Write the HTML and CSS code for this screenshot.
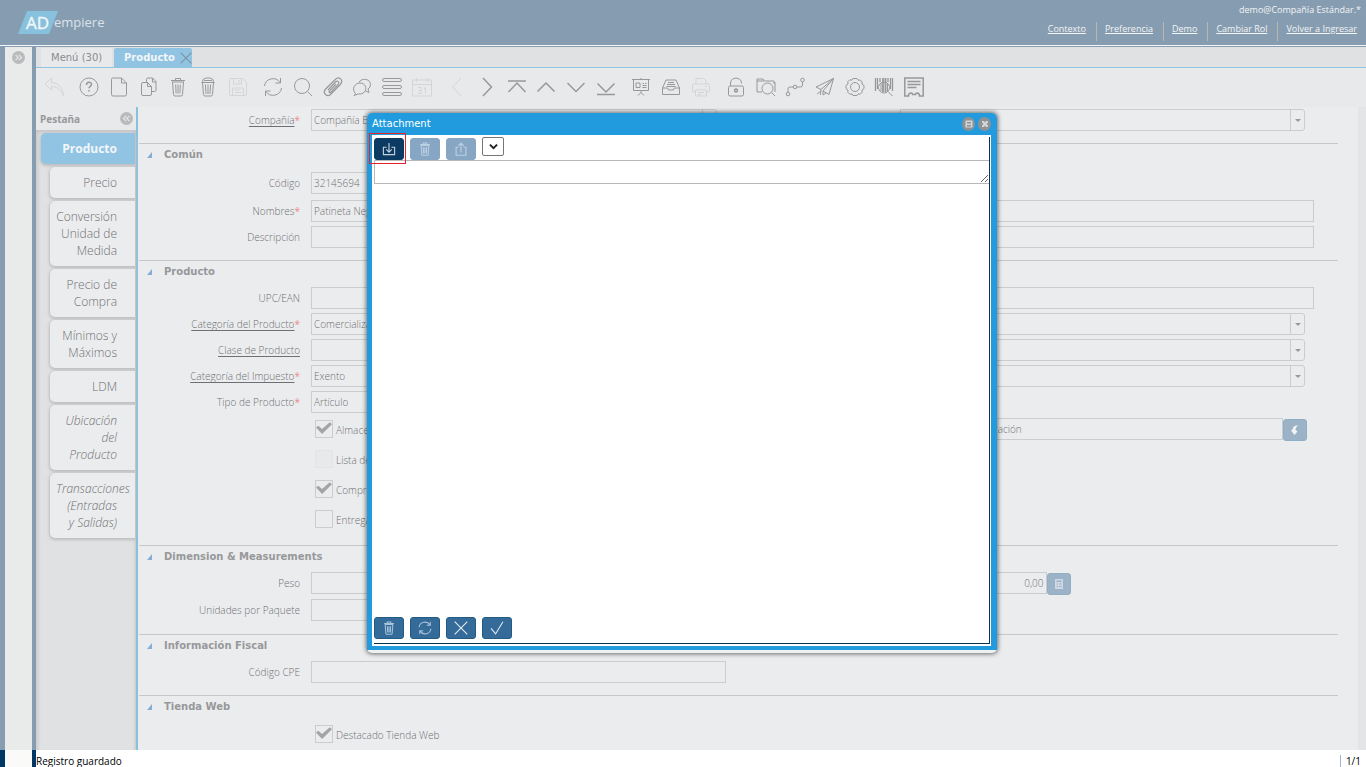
FILE: index.html
```html
<!DOCTYPE html>
<html lang="es">
<head>
<meta charset="utf-8">
<title>ADempiere - Producto</title>
<link rel="stylesheet" href="styles.css">
</head>
<body>
<svg class="sprite" aria-hidden="true">
  <symbol id="i-undo" viewBox="0 0 20 20"><path d="M7.500 1L1 7l6.500 6V9.500c5 0 9 2 12 9.500-.5-8-5-13-12-13.500z"/></symbol>
  <symbol id="i-help" viewBox="0 0 20 20"><circle cx="10" cy="10" r="9"/><path d="M7.500 8c0-3.500 5-3.500 5-.7 0 2-2.500 2-2.500 4M10 13v1.500" stroke-width="1.500"/></symbol>
  <symbol id="i-new" viewBox="0 0 20 20"><path d="M3.500 1h9l5 5v11.500q0 1.500-1.500 1.500H4q-1.500 0-1.500-1.500V2.500Q2.500 1 3.500 1zM12.500 1v5h5"/></symbol>
  <symbol id="i-copy" viewBox="0 0 20 20"><path d="M4 5.500h4.500l4 4V17q0 1.500-1.500 1.500H4q-1.500 0-1.500-1.500V7Q2.500 5.500 4 5.500zM8.500 5.500v4h4M7.500 5.500v-3Q7.500 1 9 1h4.500L17 4.500V13q0 1.500-1.500 1.500h-3M13.500 1v4H17"/></symbol>
  <symbol id="i-trash" viewBox="0 0 20 20"><path d="M3 3.500h14M7.500 3V1.500h5V3M4 5h12M4.500 5l1 12.500q0 1.500 1.500 1.500h6q1.500 0 1.500-1.500L15.500 5M7.700 7.500l.4 9M10 7.500v9M12.300 7.500l-.4 9"/></symbol>
  <symbol id="i-trash2" viewBox="0 0 20 20"><path d="M3.500 5.500h13M4.500 5L5 2.500 8 1h4l3 1.500.5 2.500M6 3.500h8M4.500 5.500l1 12q0 1.500 1.500 1.500h6q1.500 0 1.500-1.500l1-12M7.300 7.500l.8 9.500M10 7.500V17M12.700 7.500l-.8 9.500"/></symbol>
  <symbol id="i-save" viewBox="0 0 20 20"><path d="M2.500 1.500h12L18.500 5v12.500q0 1-1 1h-15q-1 0-1-1v-15q0-1 1-1zM5.500 1.500V7h8V1.500M11 3v2.500M4.500 18v-7h11v7M6.500 13h5M6.500 15.500h7"/></symbol>
  <symbol id="i-refresh" viewBox="0 0 20 20"><path d="M1.500 9A8.500 8.500 0 0 1 17 5.500M18.500 11A8.500 8.500 0 0 1 3 14.500M17.500 1v5h-5M2.500 19v-5h5"/></symbol>
  <symbol id="i-search" viewBox="0 0 20 20"><circle cx="9" cy="9" r="7.500"/><path d="M14.500 14.500L19 19"/></symbol>
  <symbol id="i-clip" viewBox="0 0 20 20"><path d="M5 13l7.500-8c2-2 4.500.3 2.700 2.300l-7.500 8c-1 1-2.200-.2-1.300-1.200l6.600-7M7.500 17.500l9.800-10c3.800-4.500-1.500-8.800-5-5L2.700 12c-4 4.500 1.800 8.500 4.800 5.500z" stroke-width="1.200"/></symbol>
  <symbol id="i-chat" viewBox="0 0 20 20"><path d="M7 5.500C8.500 1 18.500 1 18.500 7.500q0 3-2.500 4.500l1 3.500-3.500-1.500"/><path d="M3.500 16.500C-1 12 3 6 8 6s8 5.500 4 9.500q-2.500 2-6 1.500L2 18.500z"/></symbol>
  <symbol id="i-list" viewBox="0 0 20 20"><rect x=".5" y="1.500" width="19" height="3" rx="1.500"/><rect x=".5" y="8.500" width="19" height="3" rx="1.500"/><rect x=".5" y="15.500" width="19" height="3" rx="1.500"/></symbol>
  <symbol id="i-cal" viewBox="0 0 20 20"><path d="M.5 3h19v16H.5zM.5 7.500h19M4.500 1v4M15.500 1v4M6 10.500h3v6H6M6.500 13.500H9M12 11.500l1.500-1v6"/></symbol>
  <symbol id="i-left" viewBox="0 0 20 20"><path d="M14 1L5.500 10 14 19"/></symbol>
  <symbol id="i-right" viewBox="0 0 20 20"><path d="M6 1l8.500 9L6 19" stroke-width="1.500"/></symbol>
  <symbol id="i-first" viewBox="0 0 20 20"><path d="M1 4h18M1.500 15L10 6l8.500 9" stroke-width="1.500"/></symbol>
  <symbol id="i-up" viewBox="0 0 20 20"><path d="M1.500 14.500L10 6l8.500 8.500" stroke-width="1.500"/></symbol>
  <symbol id="i-down" viewBox="0 0 20 20"><path d="M1.500 6l8.500 8.500L18.500 6" stroke-width="1.500"/></symbol>
  <symbol id="i-last" viewBox="0 0 20 20"><path d="M1 17.500h18M1.500 6.500l8.500 8.500 8.500-8.500" stroke-width="1.500"/></symbol>
  <symbol id="i-board" viewBox="0 0 20 20"><path d="M1 2.500h18M2.500 3v10.500h15V3M10 2.500V1M10 13.500v2M7 18.500l3-3 3 3M5 6h4v4.500H5zM11.500 6.500H13M14 6.500h1.500M11.500 8.500h4M11.500 10.500h4"/></symbol>
  <symbol id="i-inbox" viewBox="0 0 20 20"><path d="M1.500 11v6.500h17V11L15 3H5zM1.500 11H6q1.500 0 1.500 2h5q0-2 1.500-2h4.500M7 5.500h6M6 7.500h8M5.500 9.500h9"/></symbol>
  <symbol id="i-print" viewBox="0 0 20 20"><path d="M5 7V1.500h7.500L15 4v3M4 15H1.500V9q0-2 1.500-2h14q1.500 0 1.500 2v6H16M4.500 13h11v6h-11zM7 15.500h6M7 17.500h3M14 9.500h2"/></symbol>
  <symbol id="i-lock" viewBox="0 0 20 20"><rect x="2.500" y="9" width="15" height="10" rx="1.500"/><path d="M4.500 9V6c0-6.500 11-6.500 11 0v.5"/><circle cx="10" cy="13.500" r="1.500" stroke-width="1.500"/></symbol>
  <symbol id="i-folder" viewBox="0 0 20 20"><path d="M1 15V2h6l1.500 2H18v3M1 15h5M19 15V5M1 4h7"/><circle cx="11.500" cy="11.500" r="5.500"/><path d="M15.500 15.500L19 19"/></symbol>
  <symbol id="i-flow" viewBox="0 0 20 20"><circle cx="3" cy="17" r="1.800"/><circle cx="10" cy="10" r="1.800"/><circle cx="17.500" cy="3" r="1.800"/><path d="M3 15v-3q0-2 2-2h3M12 10h3.500q2 0 2-2V5"/></symbol>
  <symbol id="i-send" viewBox="0 0 20 20"><path d="M18.500 1.500L1 10l5 2.500L18.500 1.500 8 14l6 3.500zM6 12.500L5.500 18M8 14v4l3-2M2 17l4-3"/></symbol>
  <symbol id="i-gear" viewBox="0 0 20 20"><path d="M8 1.500h4l1 1.700 2.300-.2 1.900 2-.3 2L19 8.500v3L17 13l.2 2.200-2 2-2.200-.3-1 1.600H8l-1-1.600-2.200.3-2-2L3 13l-2-1.500v-3L3 7l-.2-2.200 2-2 2.200.4z"/><circle cx="10" cy="10" r="4.500"/></symbol>
  <symbol id="i-bar" viewBox="0 0 20 20"><path d="M1.500 1v13M3.500 1v11M16.500 1v11M18.500 1v13M6 1v4M14 1v4" stroke-width="1.300"/><path d="M9 1v14M11.500 1v14" stroke-width="1.800"/><path d="M7 6v8M13.500 6v8"/><circle cx="10" cy="10.500" r="5.500"/><path d="M14 14.500l4.500 4.500"/></symbol>
  <symbol id="i-receipt" viewBox="0 0 20 20"><path d="M.8 19V1h18.400v18h-3.700q0-3-2.500-3-1.500 0-1.500 1.500h-3Q8.500 16 7 16q-2.500 0-2.500 3z" stroke-width="1.500"/><path d="M3.500 4.500h13M3.500 7.500h13M3.500 10.500h9" stroke-width="1.300"/></symbol>
  <symbol id="i-import" viewBox="0 0 20 20"><path d="M6.500 7.500H2v10.500h16V7.500h-4.500M10 1.500v13M6 10.500l4 4 4-4" stroke-width="1.600"/></symbol>
  <symbol id="i-export" viewBox="0 0 20 20"><path d="M6.500 7.500H3v11.500h14V7.500h-3.500M10 15V1.500M6 5.500l4-4 4 4" stroke-width="1.600"/></symbol>
  <symbol id="i-x" viewBox="0 0 20 20"><path d="M1 1l18 18M19 1L1 19"/></symbol>
  <symbol id="i-ok" viewBox="0 0 20 20"><path d="M1.500 10.500L8 18.500 18.500 1"/></symbol>
  <symbol id="i-dleft" viewBox="0 0 20 20"><path d="M9.500 6l-4 4 4 4M14.500 6l-4 4 4 4" stroke-width="2"/></symbol>
  <symbol id="i-dright" viewBox="0 0 20 20"><path d="M5.500 6l4 4-4 4M10.500 6l4 4-4 4" stroke-width="2"/></symbol>
</svg>

<div class="app">
  <header class="top">
    <svg class="logo" viewBox="0 0 90 26" role="img" aria-label="ADempiere">
      <path class="logo-mark" d="M9 1h31l-9 23H0z"/>
      <text class="logo-ad" x="8" y="19">AD</text>
      <text class="logo-rest" x="36" y="17">empiere</text>
    </svg>
    <div class="account">
      <p class="who">demo@Compañía Estándar.*</p>
      <nav class="links">
        <a href="#">Contexto</a>
        <a href="#">Preferencia</a>
        <a href="#">Demo</a>
        <a href="#">Cambiar Rol</a>
        <a href="#">Volver a Ingresar</a>
      </nav>
    </div>
  </header>

  <div class="body">
    <aside class="rail">
      <button class="round" aria-label="Expandir"><svg><use href="#i-dright"/></svg></button>
    </aside>
    <main class="work">
      <nav class="tabs">
        <a class="tab" href="#">Menú (30)</a>
        <a class="tab tab-on" href="#">Producto <svg class="tab-x"><use href="#i-x"/></svg></a>
      </nav>
      <div class="tools">
        <div class="grp"><button class="off" aria-label="Deshacer"><svg><use href="#i-undo"/></svg></button></div>
        <div class="grp grp-6">
          <button aria-label="Ayuda"><svg><use href="#i-help"/></svg></button>
          <button aria-label="Nuevo"><svg><use href="#i-new"/></svg></button>
          <button aria-label="Copiar"><svg><use href="#i-copy"/></svg></button>
          <button aria-label="Eliminar"><svg><use href="#i-trash"/></svg></button>
          <button aria-label="Eliminar selección"><svg><use href="#i-trash2"/></svg></button>
          <button class="off" aria-label="Guardar"><svg><use href="#i-save"/></svg></button>
        </div>
        <div class="grp grp-6">
          <button aria-label="Refrescar"><svg><use href="#i-refresh"/></svg></button>
          <button aria-label="Buscar"><svg><use href="#i-search"/></svg></button>
          <button aria-label="Adjunto"><svg><use href="#i-clip"/></svg></button>
          <button aria-label="Chat"><svg><use href="#i-chat"/></svg></button>
          <button aria-label="Cambiar vista"><svg><use href="#i-list"/></svg></button>
          <button class="off" aria-label="Historial"><svg><use href="#i-cal"/></svg></button>
        </div>
        <div class="grp grp-6">
          <button class="off" aria-label="Padre"><svg><use href="#i-left"/></svg></button>
          <button aria-label="Detalle"><svg><use href="#i-right"/></svg></button>
          <button aria-label="Primero"><svg><use href="#i-first"/></svg></button>
          <button aria-label="Anterior"><svg><use href="#i-up"/></svg></button>
          <button aria-label="Siguiente"><svg><use href="#i-down"/></svg></button>
          <button aria-label="Último"><svg><use href="#i-last"/></svg></button>
        </div>
        <div class="grp grp-3">
          <button aria-label="Informe"><svg><use href="#i-board"/></svg></button>
          <button aria-label="Archivo"><svg><use href="#i-inbox"/></svg></button>
          <button class="off" aria-label="Imprimir"><svg><use href="#i-print"/></svg></button>
        </div>
        <div class="grp grp-7">
          <button aria-label="Bloquear"><svg><use href="#i-lock"/></svg></button>
          <button aria-label="Acercar"><svg><use href="#i-folder"/></svg></button>
          <button aria-label="Flujo de trabajo"><svg><use href="#i-flow"/></svg></button>
          <button aria-label="Solicitudes"><svg><use href="#i-send"/></svg></button>
          <button aria-label="Proceso"><svg><use href="#i-gear"/></svg></button>
          <button aria-label="Información de producto"><svg><use href="#i-bar"/></svg></button>
          <button aria-label="Recibo"><svg><use href="#i-receipt"/></svg></button>
        </div>
      </div>

      <div class="panes">
        <nav class="side">
          <div class="side-head">Pestaña <button class="round" aria-label="Contraer"><svg><use href="#i-dleft"/></svg></button></div>
          <div class="side-list">
            <a class="st st-on" href="#">Producto</a>
            <a class="st" href="#">Precio</a>
            <a class="st" href="#">Conversión<br>Unidad de<br>Medida</a>
            <a class="st" href="#">Precio de<br>Compra</a>
            <a class="st" href="#">Mínimos y<br>Máximos</a>
            <a class="st" href="#">LDM</a>
            <a class="st st-sub" href="#">Ubicación<br>del<br>Producto</a>
            <a class="st st-sub" href="#">Transacciones<br>(Entradas<br>y Salidas)</a>
          </div>
        </nav>

        <form class="form">
          <div class="lead">
            <div class="row">
              <label for="org"><u>Compañía</u><b>*</b></label>
              <span class="combo"><select id="org"><option>Compañía Estándar</option></select></span>
              <span class="combo second"><select aria-label="Organización"><option></option></select></span>
            </div>
          </div>

          <section class="sec">
            <h2>Común</h2>
            <div class="row row-first"><label for="cod">Código</label><input id="cod" value="32145694"></div>
            <div class="row"><label for="nom">Nombres<b>*</b></label><input id="nom" value="Patineta Negra"><input class="second" aria-label="Nombre adicional"></div>
            <div class="row"><label for="des">Descripción</label><input id="des"><input class="second" aria-label="Comentario"></div>
          </section>

          <section class="sec">
            <h2>Producto</h2>
            <div class="row"><label for="upc">UPC/EAN</label><input id="upc"><input class="second" aria-label="SKU"></div>
            <div class="row"><label for="cat"><u>Categoría del Producto</u><b>*</b></label><span class="combo"><select id="cat"><option>Comercialización</option></select></span><span class="combo second"><select aria-label="Grupo"><option></option></select></span></div>
            <div class="row"><label for="cla"><u>Clase de Producto</u></label><span class="combo"><select id="cla"><option></option></select></span><span class="combo second"><select aria-label="Clasificación"><option></option></select></span></div>
            <div class="row"><label for="imp"><u>Categoría del Impuesto</u><b>*</b></label><span class="combo"><select id="imp"><option>Exento</option></select></span><span class="combo second"><select aria-label="Unidad"><option></option></select></span></div>
            <div class="row"><label for="tip">Tipo de Producto<b>*</b></label><span class="combo"><select id="tip"><option>Artículo</option></select></span></div>
            <div class="row row-check">
              <label class="check"><input type="checkbox" checked> Almacenado</label>
              <span class="with-btn second"><input class="loc" aria-label="Ubicación" value="Ubicación"><button type="button" class="mini" aria-label="Elegir ubicación"><svg viewBox="0 0 12 12"><path d="M9.500 1.500Q4 1 3.500 5.500L2 6.500 5.500 11 8.500 7.500 6.500 6Q6.500 3 9.500 1.500z"/></svg></button></span>
            </div>
            <div class="row row-check"><label class="check"><input type="checkbox" disabled> Lista de Materiales</label></div>
            <div class="row row-check"><label class="check"><input type="checkbox" checked> Comprado</label></div>
            <div class="row row-check"><label class="check"><input type="checkbox"> Entrega Directa</label></div>
          </section>

          <section class="sec">
            <h2>Dimension &amp; Measurements</h2>
            <div class="row row-num">
              <label for="pes">Peso</label><input id="pes">
              <span class="with-btn second"><input class="num" aria-label="Volumen" value="0,00"><button type="button" class="mini" aria-label="Calculadora"><svg viewBox="0 0 12 12"><path fill-rule="evenodd" opacity=".6" d="M2 1h8v10H2zM3.500 2.500v1.500h5V2.500zM3.500 5.500v1h1.500v-1zM6 5.500v1h2.500v-1zM3.500 8v1h1.500V8zM6 8v1h2.500V8z"/></svg></button></span>
            </div>
            <div class="row row-num"><label for="uni">Unidades por Paquete</label><input id="uni"></div>
          </section>

          <section class="sec">
            <h2>Información Fiscal</h2>
            <div class="row"><label for="cpe">Código CPE</label><input id="cpe"></div>
          </section>

          <section class="sec">
            <h2>Tienda Web</h2>
            <div class="row row-check"><label class="check"><input type="checkbox" checked> Destacado Tienda Web</label></div>
          </section>
        </form>
      </div>
    </main>
  </div>

  <footer class="status"><span>Registro guardado</span><span class="count">1/1</span></footer>
</div>

<div class="modal" role="dialog" aria-labelledby="mt">
  <div class="win">
    <div class="bar">
      <h1 id="mt">Attachment</h1>
      <button class="wbtn" aria-label="Maximizar"><svg viewBox="0 0 12 12"><path fill-rule="evenodd" d="M3 2.500h6l.5.5v6.500H2.500V3zM4 4v1.500h4V4zM4 7v1.500h4V7z"/></svg></button>
      <button class="wbtn" aria-label="Cerrar"><svg viewBox="0 0 12 12"><path d="M3 3h2l1 1.500L7 3h2v1.500L7.500 6 9 7.500V9H7L6 7.500 5 9H3V7.500L4.500 6 3 4.500z"/></svg></button>
    </div>
    <div class="sheet">
      <div class="content">
        <div class="acts acts-top">
          <button class="act act-on" aria-label="Cargar"><svg><use href="#i-import"/></svg></button>
          <button class="act act-dim" disabled aria-label="Borrar"><svg><use href="#i-trash"/></svg></button>
          <button class="act act-dim" disabled aria-label="Exportar"><svg><use href="#i-export"/></svg></button>
          <span class="pick"><select aria-label="Archivo adjunto"><option></option></select><svg viewBox="0 0 20 20"><path d="M3.500 6.500L10 13l6.500-6.500"/></svg></span>
        </div>
        <textarea class="note" aria-label="Nota"></textarea>
        <div class="preview"></div>
        <div class="acts">
          <button class="act" aria-label="Borrar todo"><svg><use href="#i-trash"/></svg></button>
          <button class="act" aria-label="Refrescar"><svg><use href="#i-refresh"/></svg></button>
          <button class="act act-lit" aria-label="Cancelar"><svg><use href="#i-x"/></svg></button>
          <button class="act act-lit" aria-label="Aceptar"><svg><use href="#i-ok"/></svg></button>
        </div>
      </div>
    </div>
  </div>
</div>
</body>
</html>
```
FILE: styles.css
```css
*, *::before, *::after { box-sizing: border-box; }
body { margin: 0; font: 10px/14px "Open Sans", "Noto Sans", sans-serif; color: #8b8c8e; background: #fff; }
button, input, select, textarea { font: inherit; color: inherit; margin: 0; padding: 0; border: 0; background: none; border-radius: 0; }
a { color: inherit; }
p, h1, h2 { margin: 0; }
svg { display: block; fill: none; stroke: currentColor; }
.sprite { position: absolute; width: 0; height: 0; }

.app { height: 100vh; display: flex; flex-direction: column; overflow: hidden; }

.top { height: 47px; flex: none; display: flex; justify-content: space-between; background: #869cb0; border-bottom: 1px solid #869cb0; box-shadow: inset 0 -1px #f4f6f8; color: #f2f4f6; padding: 10px 5px 0 18px; font-size: 9px; }
.logo { width: 90px; height: 26px; stroke: none; }
.logo-mark { fill: #87c1de; }
.logo-ad { font: 17px "Open Sans", sans-serif; fill: #f2f6f9; stroke: #f2f6f9; stroke-width: .4px; }
.logo-rest { font: 13px "Open Sans", sans-serif; fill: #dbe2e9; }
.account { margin-top: -7px; display: flex; flex-direction: column; align-items: flex-end; gap: 5px; }
.links { display: flex; }
.links a { height: 19px; padding: 0 10px 0 8px; border-left: 1px solid #b9b8b4; }
.links a:first-child { border-left: 0; }
.links a:last-child { padding-right: 4px; }

.body { flex: 1; min-height: 0; display: flex; }
.rail { width: 36px; flex: none; border-left: 5px solid #869cb0; border-right: 4px solid #869cb0; background: #e9ebea; padding: 4px 0 0 7px; }
.round { width: 13px; height: 13px; border-radius: 50%; background: #b9babc; color: #e4e5e7; }
.round svg { width: 13px; height: 13px; }
.work { flex: 1; min-width: 0; display: flex; flex-direction: column; }

.tabs { height: 21px; flex: none; display: flex; gap: 2px; padding: 1px 0 0 5px; background: #e0e1e3; border-bottom: 1px solid #91c4e2; font: 10px/19px "DejaVu Sans", sans-serif; }
.tab { width: 71px; padding-left: 10px; background: #e8e9eb; text-decoration: none; white-space: nowrap; }
.tab-on { width: 78px; background: #91c4e2; color: #f2f6f9; font-weight: bold; display: flex; align-items: center; justify-content: space-between; border-radius: 2px 2px 0 0; }
.tab-x { width: 12px; height: 12px; color: #7c96a8; stroke-width: 2px; }

.tools { height: 39px; flex: none; display: flex; align-items: center; gap: 15px; padding: 0 0 2px 8px; background: #e8e9eb; color: #97989a; }
.tools button, .tools svg { width: 20px; height: 20px; display: block; }
.tools .off { color: #d4d5d7; }
.grp { display: flex; justify-content: space-between; }
.grp-6 { width: 169px; }
.grp-3 { width: 80px; }
.grp-7 { width: 198px; }

.panes { flex: 1; min-height: 0; display: flex; }
.side { width: 102px; flex: none; background: #e0e1e3; border-right: 2px solid #87c1de; display: flex; flex-direction: column; }
.side-head { height: 23px; display: flex; align-items: center; justify-content: space-between; padding: 0 3px 0 4px; background: #e8e9eb; font: bold 10px/14px "Noto Sans", sans-serif; color: #97989a; }
.side-list { flex: 1; display: flex; flex-direction: column; gap: 3px; align-items: flex-end; padding: 3px 1px 0 0; box-shadow: inset 3px 4px 4px -2px #bfc0c2, inset -3px 0 3px -2px #c4c5c7; }
.st { width: 85px; padding: 7px 18px 7px 6px; border-radius: 5px 0 0 5px; background: #ebecee; box-shadow: 0 1px 3px 1px #bdbec0; text-align: right; font-size: 12px; line-height: 17px; font-weight: 300; color: #6f7072; text-decoration: none; }
.st-on { width: 94px; background: #91c4e2; color: #f2f6f9; font-weight: bold; }
.st-sub { font-style: italic; }

.form { flex: 1; min-width: 0; background: #ebecee; padding: 2px 20px 0 1px; border-right: 8px solid #e4e5e7; overflow: hidden; }
.lead { padding-bottom: 12px; }
.sec { border-top: 1px solid #c6c7c9; padding-bottom: 12px; display: flex; flex-direction: column; gap: 4px; }
.sec h2 { height: 22px; padding-left: 25px; display: flex; align-items: center; font: bold 10px/14px "DejaVu Sans", sans-serif; color: #97989a; position: relative; }
.sec h2::before { content: ""; position: absolute; left: 8px; top: 8px; width: 5px; height: 6px; background: #85add6; clip-path: polygon(100% 0, 100% 100%, 0 100%); }
.row { display: grid; grid-template-columns: 161px 1fr 152px 1fr 13px; column-gap: 11px; align-items: start; min-height: 22px; }
.row > label { text-align: right; line-height: 22px; font-weight: 300; color: #6f7072; white-space: nowrap; }
.row b { color: #ef8a8a; font-weight: normal; }
.row u { text-underline-offset: 2px; }
.row input:not([type]), .row select { width: 100%; min-width: 0; height: 22px; border: 1px solid #cbccce; padding: 0 2px; font-weight: 300; color: #6f7072; }
.second { grid-column: 4; }
.row-first { padding-top: 2px; min-height: 26px; }
.row-num { min-height: 23px; }
.combo { position: relative; margin-right: 9px; }
.combo select { appearance: none; display: block; border-radius: 0 3px 3px 0; }
.combo::before { content: ""; position: absolute; right: 14px; top: 0; width: 1px; height: 22px; background: #cbccce; }
.combo::after { content: ""; position: absolute; right: 4px; top: 10px; border: 3px solid transparent; border-top-color: #97989a; border-bottom: 0; }
.row-check { min-height: 26px; padding-top: 1px; }
.row > .check { grid-column: 2; grid-row: 1; display: flex; align-items: flex-start; gap: 3px; padding: 2px 0 0 4px; text-align: left; line-height: 20px; }
.check input { appearance: none; width: 18px; height: 18px; border: 1px solid #cbccce; }
.check input:checked::before { content: ""; display: block; width: 16px; height: 12px; margin-top: 1px; background: #a3a4a6; clip-path: polygon(0 46%, 14% 32%, 38% 58%, 86% 2%, 100% 18%, 38% 100%); }
.check input:disabled { border-color: #e3e4e6; background: #e8e9eb; }
.with-btn { display: flex; align-items: flex-start; grid-row: 1; }
.row .with-btn .loc { width: auto; flex: 1; padding-left: 77px; }
.row .with-btn .num { width: 147px; text-align: right; }
.mini { width: 24px; height: 22px; margin-top: 1px; border: 1px solid #8fb0c4; border-radius: 3px; background: #9bb2c7; display: grid; place-items: center; }
.loc + .mini { margin-right: 7px; }
.mini svg { width: 12px; height: 12px; fill: #f2f4f6; stroke: none; }

.status { height: 17px; flex: none; display: flex; align-items: flex-end; padding-right: 5px; color: #000; font-weight: 500; line-height: 12px; }
.status::before { content: ""; width: 36px; height: 17px; border-left: 5px solid #003764; border-right: 4px solid #003764; background: #fafaf8; }
.count { margin-left: auto; padding-left: 5px; border-left: 1px solid #9db3e8; }

.modal { position: absolute; top: 113px; left: calc(50% - 316px); width: 630px; height: 540px; padding-bottom: 3px; border-radius: 5px; background: #eff0f1; box-shadow: 0 0 4px 1px rgba(40, 40, 40, .65); }
.win { height: 100%; display: flex; flex-direction: column; background: #219bde; padding: 0 6px 4px 5px; border-radius: 5px 5px 0 0; }
.bar { height: 22px; flex: none; display: flex; align-items: center; gap: 3px; color: #fff; }
.bar h1 { flex: 1; font: 10px/14px "DejaVu Sans", sans-serif; }
.wbtn { width: 13px; height: 14px; border-radius: 50%; background: #8d9297; display: grid; place-items: center; }
.wbtn svg { width: 12px; height: 12px; fill: #d4d6d8; stroke: none; }
.sheet { flex: 1; min-height: 0; background: #fff; padding: 2px 1px 2px 2px; display: flex; }
.content { flex: 1; display: flex; flex-direction: column; border-right: 1px solid #0b3155; border-bottom: 1px solid #0b3155; padding: 1px 0 4px; }
.acts { display: flex; align-items: flex-start; gap: 6px; }
.act { position: relative; width: 30px; height: 22px; border-radius: 3px; background: #356b99; border: 1px solid #225c84; color: #a9c3da; display: grid; place-items: center; }
.act svg { width: 14px; height: 14px; stroke-width: 1.500px; }
.act-on { background: #0b3a62; border-color: #0b3a62; color: #c4d2de; }
.act-on::after { content: ""; position: absolute; inset: -6px -3px -5px -6px; border: 1px solid #e6232a; }
.act-dim { background: #86a6c3; border-color: #86a6c3; color: #bdd0e2; }
.act-lit { color: #e6eef5; }
.pick { position: relative; width: 22px; height: 19px; margin-top: -1px; }
.pick select { appearance: none; width: 100%; height: 19px; display: block; border: 1px solid #767676; border-radius: 2px; background: #fff; }
.pick svg { position: absolute; left: 6px; top: 4px; width: 11px; height: 11px; stroke: #222; stroke-width: 3.500px; pointer-events: none; }
.note { display: block; width: 100%; height: 24px; border: 1px solid #b8b8b8; border-right: 0; background: #fff; resize: both; }
.preview { flex: 1; }
```
